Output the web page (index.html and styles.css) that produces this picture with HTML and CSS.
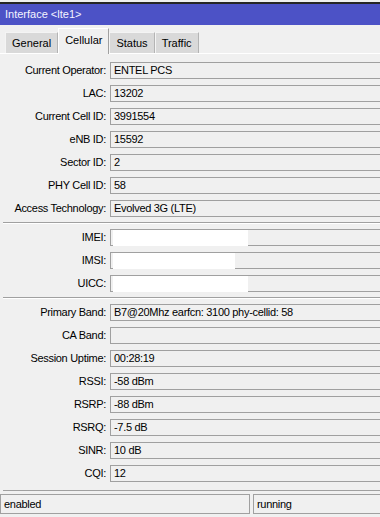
FILE: index.html
```html
<!DOCTYPE html>
<html lang="en">
<head>
    <meta charset="UTF-8">
    <title>Interface &lt;lte1&gt;</title>
    <link rel="stylesheet" href="styles.css">
</head>
<body>

    <div class="window">
        <div class="titlebar">Interface &lt;lte1&gt;</div>

        <div class="tabs">
            <div class="tab">General</div>
            <div class="tab active">Cellular</div>
            <div class="tab">Status</div>
            <div class="tab">Traffic</div>
        </div>

        <div class="pane">
            <div class="group">
                <div class="label">Current Operator:</div><div class="field">ENTEL PCS</div>
                <div class="label">LAC:</div><div class="field">13202</div>
                <div class="label">Current Cell ID:</div><div class="field">3991554</div>
                <div class="label">eNB ID:</div><div class="field">15592</div>
                <div class="label">Sector ID:</div><div class="field">2</div>
                <div class="label">PHY Cell ID:</div><div class="field">58</div>
                <div class="label">Access Technology:</div><div class="field">Evolved 3G (LTE)</div>
            </div>

            <div class="separator"></div>

            <div class="group">
                <div class="label">IMEI:</div><div class="field"><span class="hidden-value wide"></span></div>
                <div class="label">IMSI:</div><div class="field"><span class="hidden-value"></span></div>
                <div class="label">UICC:</div><div class="field"><span class="hidden-value wide"></span></div>
            </div>

            <div class="separator"></div>

            <div class="group">
                <div class="label">Primary Band:</div><div class="field">B7@20Mhz earfcn: 3100 phy-cellid: 58</div>
                <div class="label">CA Band:</div><div class="field"></div>
                <div class="label">Session Uptime:</div><div class="field">00:28:19</div>
                <div class="label">RSSI:</div><div class="field">-58 dBm</div>
                <div class="label">RSRP:</div><div class="field">-88 dBm</div>
                <div class="label">RSRQ:</div><div class="field">-7.5 dB</div>
                <div class="label">SINR:</div><div class="field">10 dB</div>
                <div class="label">CQI:</div><div class="field">12</div>
            </div>
        </div>

        <div class="statusbar">
            <div class="status-cell">enabled</div>
            <div class="status-cell running">running</div>
        </div>
    </div>

</body>
</html>
```

FILE: styles.css
```css
body {
    margin: 0;
    background: #f0f0f0;
    font-family: "Liberation Sans", Arial, sans-serif;
    font-size: 11px;
    letter-spacing: -0.3px;
    color: #000;
}

.window {
    width: 380px;
    height: 517px;
    overflow: hidden;
    display: flex;
    flex-direction: column;
}


.titlebar {
    margin-top: 2px;
    border-top: 2px solid #262626;
    height: 21px;
    line-height: 21px;
    padding-left: 5px;
    background: #4c52c6;
    color: #f4f4ff;
    font-size: 11px;
    letter-spacing: 0;
}


.tabs {
    display: flex;
    align-items: flex-end;
    height: 28px;
    padding-left: 5px;
    border-bottom: 1px solid #ffffff;
}

.tab {
    box-sizing: border-box;
    height: 21px;
    line-height: 20px;
    padding: 0 6px;
    background: #d9d9d9;
    border-top: 1px solid #f4f4f4;
    border-left: 1px solid #f4f4f4;
    border-right: 1px solid #b4b4b4;
    font-size: 11px;
    letter-spacing: 0;
}

.tab.active {
    height: 26px;
    margin-bottom: -1px;
    padding: 0 6px;
    line-height: 22px;
    background: #f0f0f0;
    border-top: 1px solid #ffffff;
    border-left: 1px solid #ffffff;
    border-right: 1px solid #a0a0a0;
}


.pane {
    padding-top: 8px;
    flex: 1;
}

.group {
    display: grid;
    grid-template-columns: 106px 1fr;
    column-gap: 4px;
    row-gap: 6px;
}

.label {
    text-align: right;
    height: 17px;
    line-height: 17px;
    white-space: nowrap;
}

.field {
    box-sizing: border-box;
    height: 17px;
    line-height: 15px;
    margin-right: -10px;
    padding: 0 3px;
    border: 1px solid #a0a0a0;
    white-space: nowrap;
}

.hidden-value {
    display: block;
    width: 122px;
    height: 16px;
    margin-left: -1px;
    background: #ffffff;
}

.hidden-value.wide {
    width: 135px;
}

.separator {
    margin: 5px 0 5px 3px;
    border-top: 1px solid #a0a0a0;
    border-bottom: 1px solid #ffffff;
}


.statusbar {
    display: flex;
    gap: 3px;
    padding: 3px 0 3px 0;
    border-top: 1px solid #a0a0a0;
    margin-left: 3px;
}

.status-cell {
    box-sizing: border-box;
    height: 20px;
    line-height: 18px;
    width: 250px;
    margin-left: -3px;
    padding-left: 3px;
    border: 1px solid #a0a0a0;
}

.status-cell.running {
    flex: 1;
    margin-left: 0;
    margin-right: -2px;
}
```
